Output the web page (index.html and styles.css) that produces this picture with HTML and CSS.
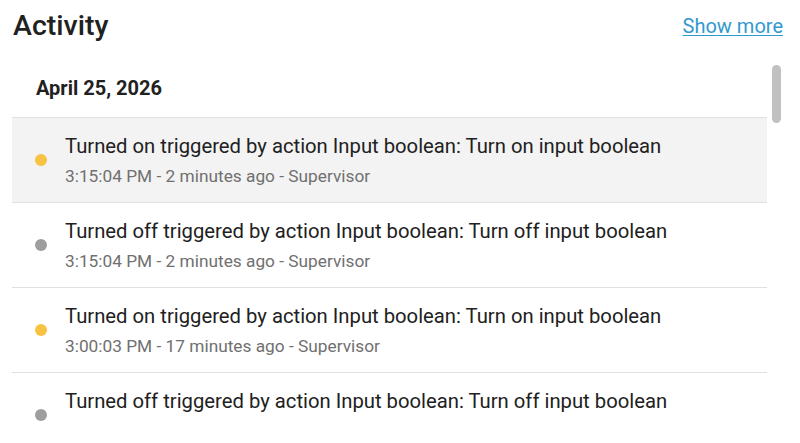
FILE: index.html
```html
<!DOCTYPE html>
<html>
<head>
<meta charset="utf-8">
<link rel="stylesheet" href="styles.css">
</head>
<body>
<div class="card">
  <div class="header">
    <h1 class="title">Activity</h1>
    <a class="more" href="#">Show more</a>
  </div>
  <div class="body">
    <div class="list">
      <div class="date">April 25, 2026</div>
      <div class="entry active">
        <span class="dot on"></span>
        <div class="text">
          <div class="msg">Turned on triggered by action Input boolean: Turn on input boolean</div>
          <div class="meta">3:15:04 PM - 2 minutes ago - Supervisor</div>
        </div>
      </div>
      <div class="entry">
        <span class="dot off"></span>
        <div class="text">
          <div class="msg">Turned off triggered by action Input boolean: Turn off input boolean</div>
          <div class="meta">3:15:04 PM - 2 minutes ago - Supervisor</div>
        </div>
      </div>
      <div class="entry">
        <span class="dot on"></span>
        <div class="text">
          <div class="msg">Turned on triggered by action Input boolean: Turn on input boolean</div>
          <div class="meta">3:00:03 PM - 17 minutes ago - Supervisor</div>
        </div>
      </div>
      <div class="entry">
        <span class="dot off"></span>
        <div class="text">
          <div class="msg">Turned off triggered by action Input boolean: Turn off input boolean</div>
          <div class="meta">3:00:03 PM - 17 minutes ago - Supervisor</div>
        </div>
      </div>
    </div>
    <div class="scroll"><div class="thumb"></div></div>
  </div>
</div>
</body>
</html>
```
FILE: styles.css
```css
html, body {
  margin: 0;
  padding: 0;
  background: #ffffff;
  font-family: Roboto, "Noto Sans", sans-serif;
  color: #212121;
  overflow: hidden;
  height: 443px;
}
.card {
  width: 800px;
}
.header {
  display: flex;
  justify-content: space-between;
  align-items: flex-start;
  padding: 8px 17px 0 13px;
  height: 55px;
  box-sizing: border-box;
}
.title {
  margin: 0;
  font-size: 28.5px;
  font-weight: 500;
  line-height: 36px;
  color: #212121;
}
.more {
  margin-top: 6px;
  font-size: 20px;
  line-height: 24px;
  color: #3199cf;
  text-decoration: underline;
  text-underline-offset: 2px;
  text-decoration-thickness: 1px;
}
.body {
  display: flex;
  padding-left: 12px;
  gap: 5px;
}
.list {
  width: 755px;
  height: 366px;
  overflow: hidden;
}
.date {
  font-size: 20px;
  font-weight: 700;
  padding: 21px 0 0 24px;
  height: 63px;
  box-sizing: border-box;
  border-bottom: 1px solid #e0e0e0;
  line-height: 24px;
}
.entry {
  display: flex;
  align-items: center;
  height: 85px;
  box-sizing: border-box;
  border-bottom: 1px solid #e0e0e0;
  padding-left: 23px;
}
.entry.active {
  background: #f3f3f3;
}
.dot {
  width: 12px;
  height: 12px;
  border-radius: 50%;
  flex: none;
  margin-right: 18px;
}
.dot.on { background: #f8c243; }
.dot.off { background: #9e9e9e; }
.msg {
  font-size: 20.25px;
  line-height: 28px;
  color: #212121;
}
.meta {
  font-size: 17.3px;
  line-height: 24px;
  color: #707070;
  margin-top: 4px;
}
.scroll {
  width: 9px;
  padding-top: 10px;
}
.thumb {
  height: 58px;
  border-radius: 5px;
  background: #c1c1c1;
}
```
